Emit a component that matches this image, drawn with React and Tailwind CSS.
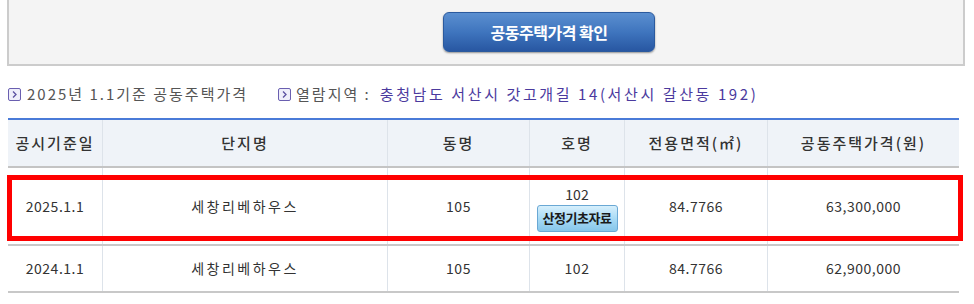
export default function App() {
  const font = { fontFamily: '"Noto Sans CJK KR", "Noto Sans", sans-serif' };
  const Icon = () => (
    <svg width="13" height="13" viewBox="0 0 13 13" className="shrink-0">
      <rect x="0.5" y="0.5" width="12" height="12" rx="1.5" fill="#eeeefa" stroke="#6a5fb0" />
      <path d="M5 3.5 L8 6.5 L5 9.5" fill="none" stroke="#5a50a0" strokeWidth="1.3" />
    </svg>
  );
  const cols = ["w-[95px]", "w-[285px]", "w-[142px]", "w-[95px]", "w-[143px]", "flex-1"];
  const cell = "flex items-center justify-center border-r border-[#dde3ea] last:border-r-0";
  const ko = "tracking-[2.5px]";
  const num = "tracking-[0.5px]";
  return (
    <div className="w-[974px] h-[304px] bg-white overflow-hidden text-[#333]" style={font}>
      <div className="ml-[7px] w-[958px] h-[66px] bg-[#f4f4f4] border-x-2 border-b-2 border-[#cccccc] flex items-start">
        <div className="ml-[434px] mt-[12px] w-[212px] h-[40px] rounded-[6px] border border-[#2b5a9e] bg-gradient-to-b from-[#5b8fd0] via-[#3f75be] to-[#2857a2] shadow-[0_1px_2px_rgba(0,0,0,0.4)] flex items-center justify-center text-white font-bold text-[16px] tracking-[-0.5px]">
          공동주택가격 확인
        </div>
      </div>
      <div className="ml-[8px] mt-[17px] h-[22px] flex items-center text-[15px] tracking-[2px]">
        <Icon />
        <span className="ml-[6px] text-[#555]">2025년 1.1기준 공동주택가격</span>
        <span className="ml-[30px]"><Icon /></span>
        <span className="ml-[5px] text-[#555]">열람지역 :</span>
        <span className="ml-[9px] text-[#4b3a9e] tracking-[2.6px]">충청남도 서산시 갓고개길 14(서산시 갈산동 192)</span>
      </div>
      <div className="relative ml-[8px] mt-[13px] w-[951px]">
        <div className="border-t-2 border-[#4a7bd8] bg-[#eff3f8] h-[50px] flex border-b-2 border-b-[#c4c4c4] text-[15px] font-medium text-[#333] tracking-[2px]">
          {["공시기준일", "단지명", "동명", "호명", "전용면적(㎡)", "공동주택가격(원)"].map((t, i) => (
            <div key={i} className={`${cols[i]} ${cell}`}>{t}</div>
          ))}
        </div>
        <div className="h-[78px] flex border-b-2 border-[#c8c8c8] text-[14px]">
          <div className={`${cols[0]} ${cell} ${num}`}>2025.1.1</div>
          <div className={`${cols[1]} ${cell} ${ko}`}>세창리베하우스</div>
          <div className={`${cols[2]} ${cell} ${num}`}>105</div>
          <div className={`${cols[3]} ${cell} flex-col`}>
            <span className="mt-[4px] leading-[18px]">102</span>
            <div className="mt-[2px] w-[81px] h-[27px] rounded-[3px] border border-[#6aa8d4] bg-gradient-to-b from-[#d6effc] via-[#a9dbf5] to-[#86c6ea] flex items-center justify-center text-[13px] font-bold text-[#1a1a1a] tracking-[-0.5px]">
              산정기초자료
            </div>
          </div>
          <div className={`${cols[4]} ${cell} ${num}`}>84.7766</div>
          <div className={`${cols[5]} ${cell} ${num}`}>63,300,000</div>
        </div>
        <div className="h-[47px] flex border-b-2 border-[#c8c8c8] text-[14px]">
          <div className={`${cols[0]} ${cell} ${num}`}>2024.1.1</div>
          <div className={`${cols[1]} ${cell} ${ko}`}>세창리베하우스</div>
          <div className={`${cols[2]} ${cell} ${num}`}>105</div>
          <div className={`${cols[3]} ${cell} ${num}`}>102</div>
          <div className={`${cols[4]} ${cell} ${num}`}>84.7766</div>
          <div className={`${cols[5]} ${cell} ${num}`}>62,900,000</div>
        </div>
        <div className="absolute left-[-1px] top-[57px] w-[956px] h-[66px] border-[5px] border-[#ff0000] pointer-events-none" />
      </div>
    </div>
  );
}
